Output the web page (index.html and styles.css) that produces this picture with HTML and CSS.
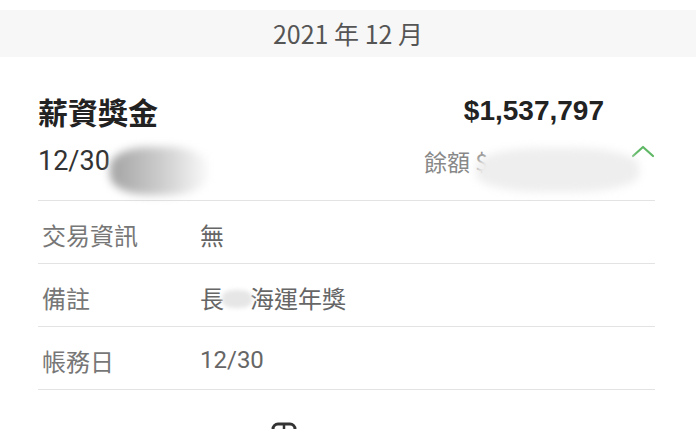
FILE: index.html
```html
<!DOCTYPE html>
<html lang="zh-Hant">
<head>
  <meta charset="UTF-8" />
  <meta name="viewport" content="width=device-width, initial-scale=1.0" />
  <title>交易明細</title>
  <link rel="stylesheet" href="styles.css">
</head>
<body>
  <div class="month-bar">2021 年 12 月</div>

  <div class="card">
    <div class="summary">
      <div class="summary-row">
        <span class="title">薪資獎金</span>
        <span class="amount">$1,537,797</span>
      </div>
      <div class="summary-row second">
        <span class="date">12/30<span class="smudge smudge-dark"></span></span>
        <span class="balance">餘額 $<span class="smudge smudge-light"></span></span>
        <svg class="chevron" width="24" height="14" viewBox="0 0 24 14">
          <polyline points="2,12 12,3 22,12" fill="none" stroke="#5fb865" stroke-width="2.2" stroke-linecap="round" stroke-linejoin="round" />
        </svg>
      </div>
    </div>

    <ul class="details">
      <li><span class="label">交易資訊</span><span class="value">無</span></li>
      <li><span class="label">備註</span><span class="value">長<span class="smudge smudge-small"></span>海運年獎</span></li>
      <li><span class="label">帳務日</span><span class="value">12/30</span></li>
    </ul>

    <div class="footer">
      <svg width="26" height="26" viewBox="0 0 26 26">
        <rect x="2" y="2" width="22" height="22" rx="5" fill="none" stroke="#333" stroke-width="3" />
        <line x1="13" y1="2" x2="13" y2="24" stroke="#333" stroke-width="2.5" />
      </svg>
    </div>
  </div>
</body>
</html>
```

FILE: styles.css
```css
html, body { margin: 0; padding: 0; background: #fff; overflow: hidden; }
body { font-family: "Noto Sans CJK TC", "Liberation Sans", sans-serif; color: #333; }

.month-bar { margin-top: 10px; height: 47px; line-height: 47px; background: #f7f7f7; text-align: center; font-size: 25px; color: #555; }

.card { padding: 0 41px 0 38px; }

.summary { padding: 36px 0 21px; border-bottom: 1px solid #e3e3e3; }
.summary-row { display: flex; align-items: center; height: 36px; }
.summary-row.second { margin-top: 14px; }
.title { font-size: 30px; font-weight: bold; color: #222; }
.amount { margin-left: auto; margin-right: 51px; font-family: "Liberation Sans", sans-serif; font-size: 28px; font-weight: bold; color: #222; }
.date { font-family: Roboto, "Liberation Sans", sans-serif; font-size: 27px; color: #333; display: flex; align-items: center; }
.balance { margin-left: auto; font-size: 23px; color: #888; display: flex; align-items: center; }
.chevron { margin-left: -8px; margin-bottom: 20px; }

.smudge { display: inline-block; border-radius: 40%; filter: blur(4px); }
.smudge-dark { width: 98px; height: 48px; margin-left: 0; margin-top: 20px; background: linear-gradient(90deg, #a3a3a3, #cfcfcf 55%, #fafafa); }
.smudge-light { width: 163px; height: 44px; margin-left: -12px; margin-top: 18px; background: #eeeeee; }
.smudge-small { width: 30px; height: 18px; margin: 4px -2px 0 -2px; background: #e6e6e6; filter: blur(2px); }

.details { list-style: none; margin: 0; padding: 0; }
.details li { display: flex; align-items: center; border-bottom: 1px solid #e3e3e3; font-size: 24px; padding-top: 4px; box-sizing: border-box; height: 63px; }
.label { width: 158px; padding-left: 4px; color: #777; }
.value { font-family: Roboto, "Noto Sans CJK TC", sans-serif; color: #666; display: flex; align-items: center; }

.footer { display: flex; justify-content: center; padding-top: 32px; margin-right: 125px; }
```
